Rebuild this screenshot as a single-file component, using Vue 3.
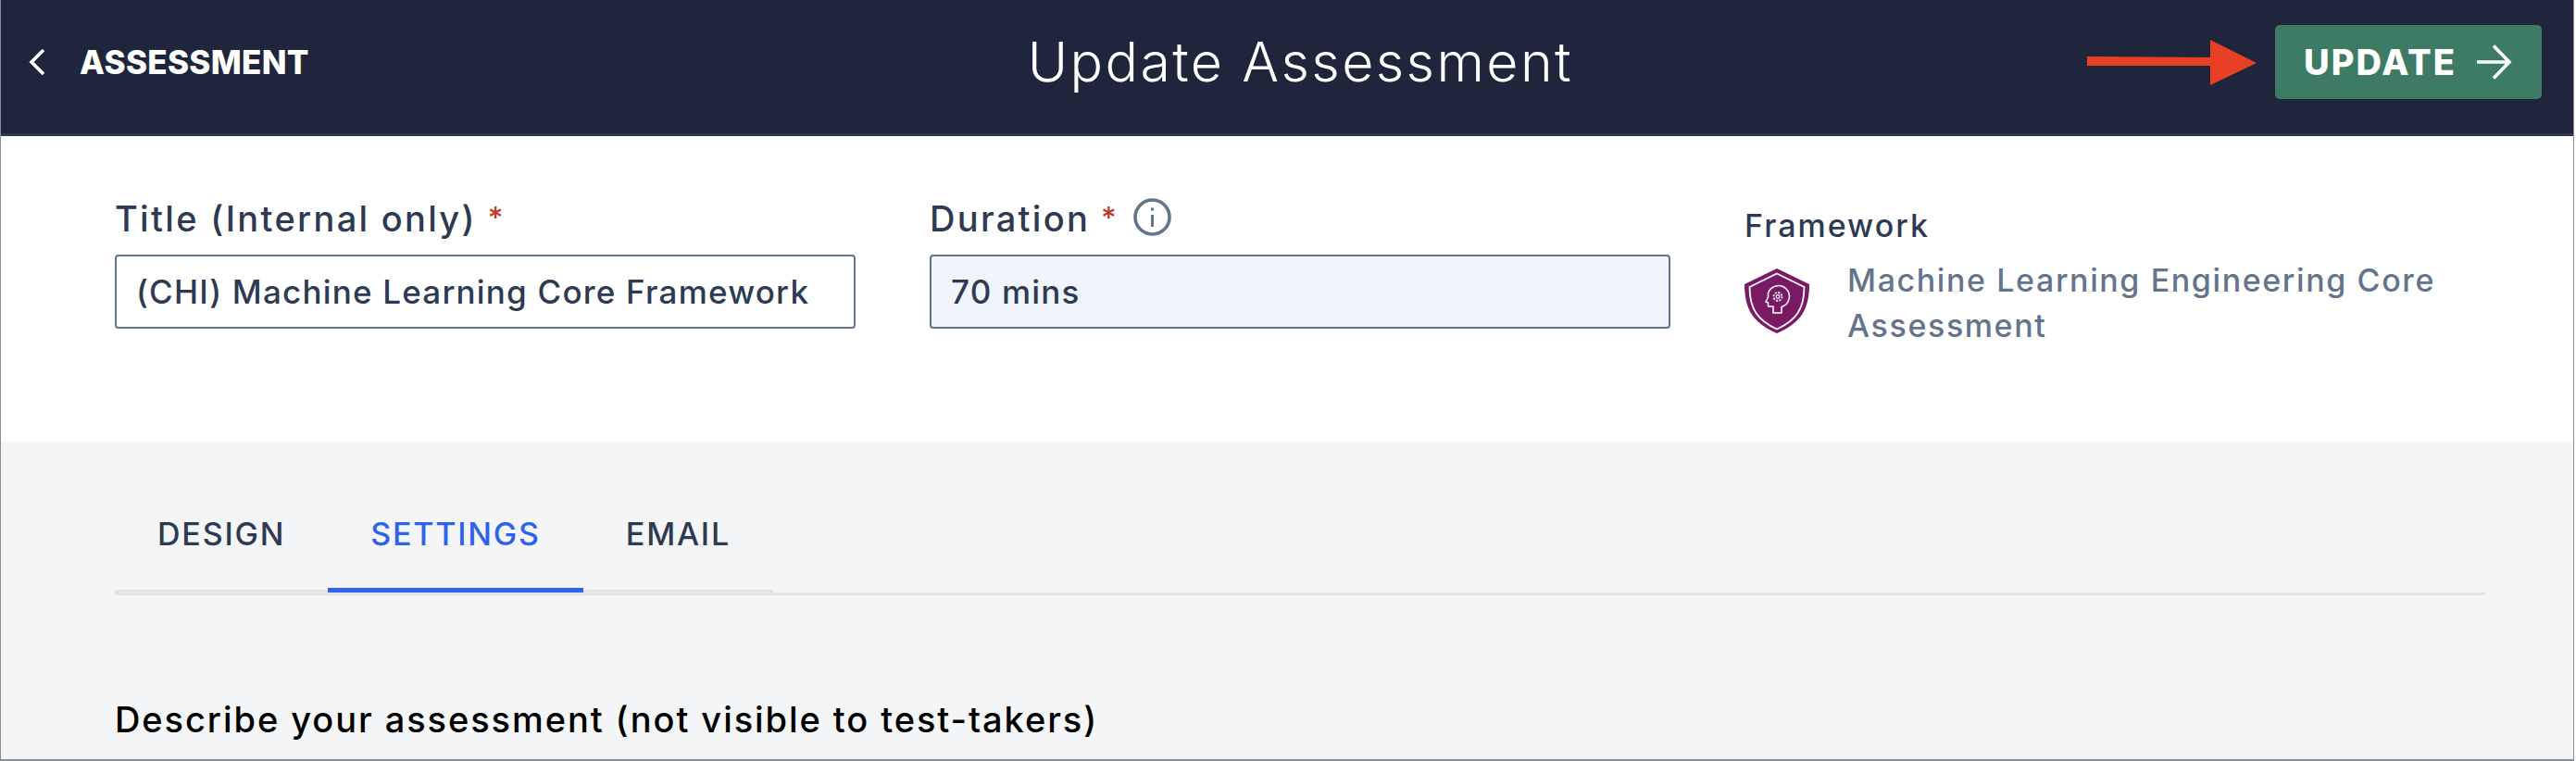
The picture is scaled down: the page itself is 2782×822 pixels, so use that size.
<script setup>
const tabs = [
  { label: 'DESIGN', active: false },
  { label: 'SETTINGS', active: true },
  { label: 'EMAIL', active: false },
]
</script>

<template>
  <div class="page">
    <header class="topbar">
      <a class="topbar__back">
        <svg class="topbar__chevron" viewBox="0 0 20 30" fill="none" stroke="#fff" stroke-width="3.6">
          <path d="M17 2 4 15l13 13" />
        </svg>
        ASSESSMENT
      </a>
      <h1 class="topbar__title">Update Assessment</h1>
      <button type="button" class="topbar__update">
        UPDATE
        <svg class="topbar__arrow" viewBox="0 0 38 38" fill="none" stroke="#fff" stroke-width="3.6">
          <path d="M0 19h35M18 1.500l17 17.500-17 17.500" />
        </svg>
      </button>
      <svg class="callout" viewBox="0 0 183 49">
        <path d="M0 18 133 19V0L183 25 133 49V28L0 28Z" fill="#e94025" />
      </svg>
    </header>

    <section class="form">
      <div class="field field--title">
        <label class="field__label">Title (Internal only) <span class="req">*</span></label>
        <div class="field__input">(CHI) Machine Learning Core Framework</div>
      </div>
      <div class="field field--duration">
        <label class="field__label">
          Duration <span class="req">*</span>
          <svg class="info" viewBox="0 0 41 41" fill="none" stroke="#64748b">
            <circle cx="20.5" cy="20.5" r="18.5" stroke-width="3.6" />
            <path d="M20.5 18v13" stroke-width="3" />
            <path d="M20.5 10.500v3" stroke-width="3" />
          </svg>
        </label>
        <div class="field__input field__input--readonly">70 mins</div>
      </div>
      <div class="framework">
        <div class="framework__label">Framework</div>
        <div class="framework__body">
          <svg class="framework__badge" viewBox="0 0 70 70">
            <path d="M35 0 70 17c0 28-10 42-35 53C10 59 0 45 0 17Z" fill="#7a1a65" />
            <path d="M35 5.500 64.500 20c0 24-9 36-29.500 45.500C14.500 56 5.500 44 5.500 20Z" fill="none" stroke="#fff" stroke-width="1.800" />
            <path d="M40 48v-6.500A11.700 11.700 0 1 0 25.500 27v4L23 36l2.500 1v4H31v7Z" fill="none" stroke="#fff" stroke-width="1.600" stroke-linejoin="round" />
            <circle cx="36" cy="30.500" r="1.800" fill="none" stroke="#fff" stroke-width="1.200" />
            <circle cx="36" cy="30.500" r="4.500" fill="none" stroke="#fff" stroke-width="1.800" stroke-dasharray="2 1.500" />
          </svg>
          <p class="framework__name">Machine Learning Engineering Core Assessment</p>
        </div>
      </div>
    </section>

    <section class="settings">
      <nav class="tabs">
        <div class="tabs__group">
          <button
            v-for="tab in tabs"
            :key="tab.label"
            type="button"
            class="tabs__tab"
            :class="{ 'tabs__tab--active': tab.active }"
          >
            {{ tab.label }}
          </button>
        </div>
      </nav>
      <h2 class="settings__heading">Describe your assessment (not visible to test-takers)</h2>
    </section>
  </div>
</template>

<style>
html,
body {
  margin: 0;
  background: #fff;
}
</style>

<style scoped>
.page {
  box-sizing: border-box;
  width: 2780px;
  height: 822px;
  overflow: hidden;
  display: flex;
  flex-direction: column;
  border-left: 1px solid #8a8d94;
  border-right: 1px solid #8a8d94;
  border-bottom: 2px solid #8a8d94;
  font-family: Inter, "Liberation Sans", sans-serif;
  color: #2d3a52;
}

.topbar {
  position: relative;
  flex: none;
  box-sizing: border-box;
  height: 147px;
  padding: 0 34px 10px 29px;
  display: flex;
  align-items: center;
  justify-content: space-between;
  background: #1f263b;
  border-bottom: 3px solid #2c3550;
}

.topbar__back {
  display: flex;
  align-items: center;
  gap: 36px;
  font-size: 35px;
  font-weight: 800;
  letter-spacing: 0.3px;
  color: #fff;
}

.topbar__chevron {
  width: 20px;
  height: 30px;
}

.topbar__title {
  margin: 0 0 0 18px;
  font-size: 59px;
  line-height: 70px;
  font-weight: 300;
  letter-spacing: 2.400px;
  color: #fff;
}

.topbar__update {
  box-sizing: border-box;
  width: 288px;
  height: 80px;
  padding: 0 32px 0 31px;
  display: flex;
  align-items: center;
  justify-content: space-between;
  border: 0;
  border-radius: 5px;
  background: #3d7b65;
  font: inherit;
  font-size: 38px;
  font-weight: 800;
  letter-spacing: 2px;
  color: #fff;
}

.topbar__arrow {
  width: 38px;
  height: 38px;
}

.callout {
  position: absolute;
  left: 2253px;
  top: 43px;
  width: 183px;
  height: 49px;
}

.form {
  flex: none;
  box-sizing: border-box;
  height: 330px;
  padding: 67px 0 0 123px;
  display: flex;
  background: #fff;
}

.field--title {
  width: 800px;
  margin-right: 80px;
}

.field--duration {
  width: 800px;
  margin-right: 80px;
}

.field__label {
  height: 61px;
  display: flex;
  align-items: flex-start;
  gap: 12px;
  font-size: 38px;
  line-height: 44px;
  font-weight: 500;
  letter-spacing: 2.300px;
}

.req {
  font-size: 32px;
  letter-spacing: 0;
  color: #c0392b;
}

.info {
  width: 41px;
  height: 41px;
  margin-left: 6px;
}

.field__input {
  box-sizing: border-box;
  height: 80px;
  padding: 0 21px;
  display: flex;
  align-items: center;
  border: 2px solid #64748b;
  border-radius: 4px;
  background: #fff;
  font-size: 35px;
  font-weight: 500;
  letter-spacing: 1.200px;
}

.field__input--readonly {
  background: #f0f4fc;
}

.framework {
  padding-top: 8px;
}

.framework__label {
  margin-bottom: 24px;
  font-size: 34px;
  line-height: 44px;
  font-weight: 500;
  letter-spacing: 2px;
}

.framework__body {
  display: flex;
  gap: 41px;
}

.framework__badge {
  flex: none;
  width: 70px;
  height: 70px;
}

.framework__name {
  width: 680px;
  margin: -12px 0 0;
  font-size: 34px;
  line-height: 49px;
  font-weight: 500;
  letter-spacing: 1.600px;
  color: #64748b;
}

.settings {
  flex: 1;
  padding: 0 95px 0 123px;
  background: #f4f5f7;
}

.tabs {
  height: 166px;
  box-sizing: border-box;
  padding-top: 70px;
  border-bottom: 3px solid #e3e4e6;
}

.tabs__group {
  box-sizing: border-box;
  display: flex;
  align-items: flex-start;
  width: fit-content;
  height: 95px;
  border-bottom: 5px solid #e3e4e6;
}

.tabs__tab {
  box-sizing: border-box;
  flex: none;
  height: 93px;
  padding: 0 46px 28px;
  border: 0;
  border-bottom: 5px solid transparent;
  background: none;
  font: inherit;
  font-size: 34px;
  line-height: 60px;
  font-weight: 500;
  letter-spacing: 1.800px;
  color: #2d3a52;
}

.tabs__tab--active {
  border-bottom-color: #2f62ec;
  color: #2f62ec;
}

.settings__heading {
  margin: 112px 0 0;
  font-size: 38px;
  line-height: 44px;
  font-weight: 500;
  letter-spacing: 1.930px;
  color: #000;
}
</style>
